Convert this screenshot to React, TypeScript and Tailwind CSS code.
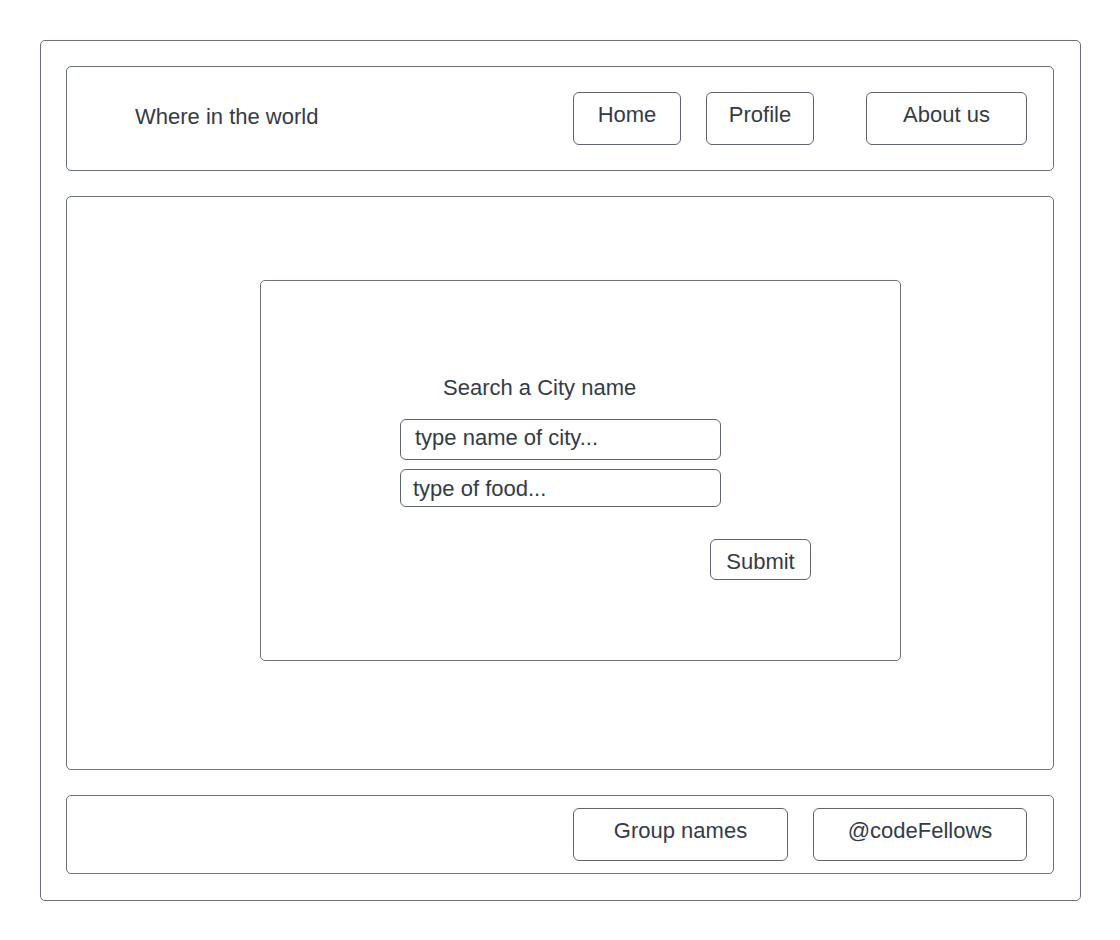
const font = { fontFamily: '"Liberation Sans", Arial, sans-serif' };

const NavButton = ({ label, width }: { label: string; width: string }) => (
  <button
    className={`${width} h-[53px] flex items-center justify-center pb-2 border border-[#5f656e] rounded-[6px] bg-white text-[22px] text-[#343b47]`}
  >
    {label}
  </button>
);

export default function App() {
  return (
    <div className="w-[1120px] h-[940px] bg-white" style={font}>
      <div className="pt-[40px] pl-[40px]">
        <div className="w-[1041px] h-[861px] border border-[#6b717a] rounded-[5px] pt-[25px] pb-[26px] pl-[25px] pr-[26px] flex flex-col gap-[25px]">
          {/* header */}
          <header className="h-[105px] shrink-0 border border-[#6b717a] rounded-[5px] flex items-center pl-[68px] pr-[26px]">
            <div className="text-[22px] text-[#343b47] pb-1">Where in the world</div>
            <nav className="ml-auto flex items-center">
              <NavButton label="Home" width="w-[108px]" />
              <div className="w-[25px]" />
              <NavButton label="Profile" width="w-[108px]" />
              <div className="w-[52px]" />
              <NavButton label="About us" width="w-[161px]" />
            </nav>
          </header>

          {/* main */}
          <main className="flex-1 border border-[#6b717a] rounded-[5px] pl-[193px] pt-[83px]">
            <div className="w-[641px] h-[381px] border border-[#6b717a] rounded-[5px] pt-[94px] pl-[139px]">
              <div className="text-[22px] text-[#343b47] leading-[26px] pl-[43px]">Search a City name</div>
              <div className="mt-[18px] flex flex-col gap-[9px] w-[321px]">
                <input
                  className="w-[321px] h-[41px] border border-[#5f656e] rounded-[6px] pl-[14px] pb-1 text-[22px] text-[#343b47] placeholder:text-[#343b47] outline-none"
                  placeholder="type name of city..."
                />
                <input
                  className="w-[321px] h-[38px] border border-[#5f656e] rounded-[6px] pl-[12px] pt-0.5 text-[22px] text-[#343b47] placeholder:text-[#343b47] outline-none"
                  placeholder="type of food..."
                />
              </div>
              <button className="mt-[32px] ml-[310px] w-[101px] h-[41px] flex items-center justify-center pt-1 border border-[#5f656e] rounded-[6px] text-[22px] text-[#343b47]">
                Submit
              </button>
            </div>
          </main>

          {/* footer */}
          <footer className="h-[79px] shrink-0 border border-[#6b717a] rounded-[5px] flex items-center justify-end gap-[25px] pr-[26px]">
            <NavButton label="Group names" width="w-[215px]" />
            <NavButton label="@codeFellows" width="w-[214px]" />
          </footer>
        </div>
      </div>
    </div>
  );
}
